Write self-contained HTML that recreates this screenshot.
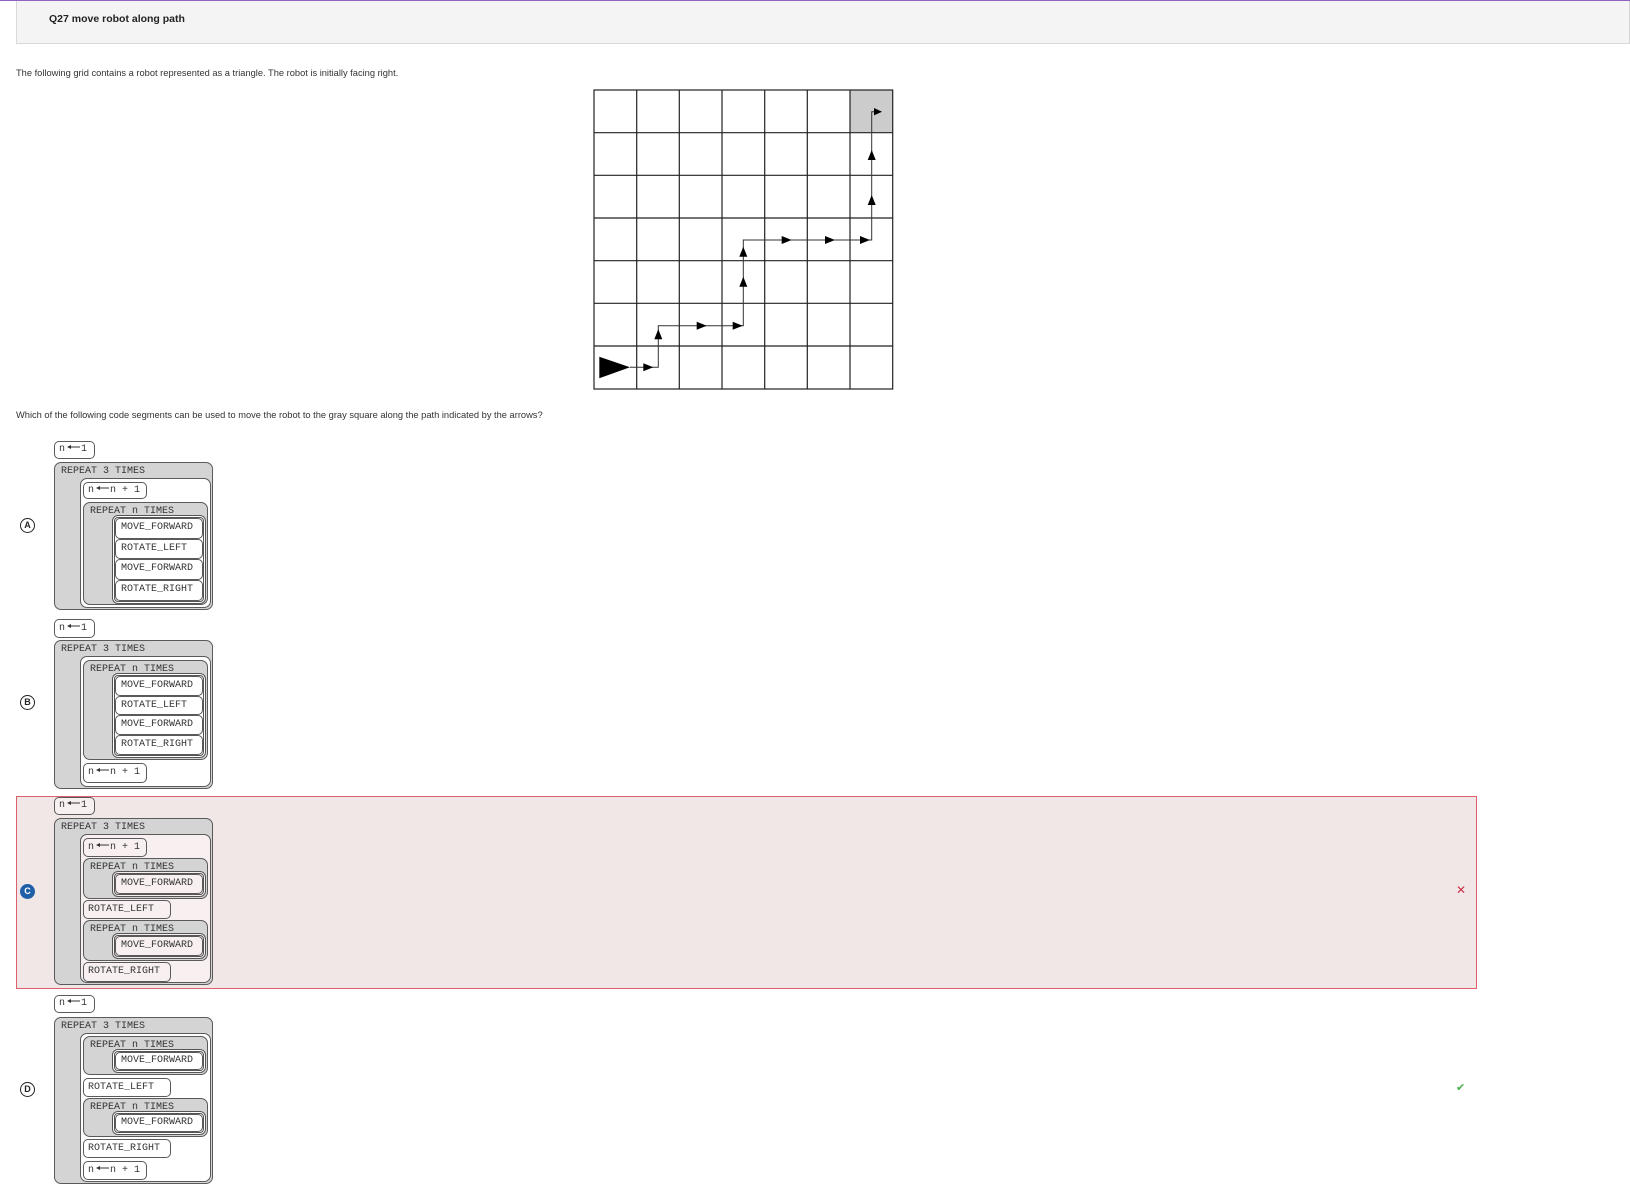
<!DOCTYPE html>
<html><head><meta charset="utf-8"><style>
html,body{margin:0;padding:0;background:#fff;width:1630px;height:1192px;overflow:hidden;position:relative;font-family:"Liberation Sans",sans-serif;}
.a{position:absolute;box-sizing:border-box;}
.w,.g,.d,.it{position:absolute;box-sizing:border-box;border:1px solid #5a5a5a;border-radius:5px;background:#fff;font:10px "Liberation Mono",monospace;color:#333;white-space:pre;}
.g{background:#d4d4d4;border-radius:7px;padding:3px 0 0 6px;line-height:12px;}
.w{padding-left:4px;}
.d{border:3px double #555;border-radius:6px;background:#fff;}
.it{position:relative;height:20px;line-height:18px;padding-left:5px;border-radius:5px;}
.circ{position:absolute;width:13px;height:13px;border:1px solid #222;border-radius:50%;font:bold 9px "Liberation Sans",sans-serif;text-align:center;line-height:13px;color:#222;box-sizing:content-box;}
.ar{display:inline-block;width:16px;height:10px;vertical-align:-1px;}
.pk .w,.pk .d,.pk .it{background:#f8f0f0;}
</style></head><body>
<div class="a" style="left:0;top:0;width:1630px;height:1px;background:#8e63c4"></div>
<div class="a" style="left:16px;top:1px;width:1614px;height:43px;background:#f4f4f4;border:1px solid #d8d8d8;border-top:none"></div>
<div class="a" style="left:49px;top:13px;font-size:10.5px;font-weight:bold;color:#222">Q27 move robot along path</div>
<div class="a" style="left:16px;top:68px;font-size:9.3px;color:#333">The following grid contains a robot represented as a triangle. The robot is initially facing right.</div>

<svg class="a" style="left:593px;top:89px" width="302" height="302" viewBox="-1 -1 302 302">
<rect x="256" y="0" width="42.7" height="42.7" fill="#ccc"/>
<g stroke="#222" stroke-width="1.2" fill="none">
<rect x="0" y="0" width="298.7" height="299"/>
<path d="M42.7 0V299M85.3 0V299M128 0V299M170.7 0V299M213.3 0V299M256 0V299M0 42.7H298.7M0 85.3H298.7M0 128H298.7M0 170.7H298.7M0 213.3H298.7M0 256H298.7"/>
</g>
<path d="M36 277.3H64.3V235.7H149.3V150H277.7V21.7H287" stroke="#333" stroke-width="1" fill="none"/>
<polygon points="5.3,266.7 5.3,288.3 36,277.3" fill="#000"/>
<g fill="#000">
<polygon points="59.3,277.3 49.3,273.3 49.3,281.3"/>
<polygon points="112.7,235.7 102.7,231.7 102.7,239.7"/>
<polygon points="148.7,235.7 138.7,231.7 138.7,239.7"/>
<polygon points="197.7,150 187.7,146 187.7,154"/>
<polygon points="241,150 231,146 231,154"/>
<polygon points="276,150 266,146 266,154"/>
<polygon points="288,21.7 280,18 280,25.4"/>
<polygon points="64.3,239.3 60.3,249.3 68.3,249.3"/>
<polygon points="149.3,186.7 145.3,196.7 153.3,196.7"/>
<polygon points="149.3,156.7 145.3,166.7 153.3,166.7"/>
<polygon points="277.7,105 273.7,115 281.7,115"/>
<polygon points="277.7,60 273.7,70 281.7,70"/>
</g>
</svg>

<div class="a" style="left:16px;top:410px;font-size:9.3px;color:#333">Which of the following code segments can be used to move the robot to the gray square along the path indicated by the arrows?</div>

<div class="a" style="left:16px;top:796px;width:1461px;height:193px;background:#f2e7e7;border:1px solid #dc5f6d"></div>
<div class="a" style="left:1456px;top:883px;color:#d03048;font:bold 12px 'DejaVu Sans',sans-serif">✕</div>
<div class="a" style="left:1456px;top:1081px;color:#4caf50;font:bold 11px 'DejaVu Sans',sans-serif">✔</div>

<div class="circ" style="left:20px;top:518px">A</div>
<div class="circ" style="left:20px;top:695px">B</div>
<div class="circ" style="left:20px;top:884px;background:#1f5fa8;color:#fff;border-color:#1f5fa8">C</div>
<div class="circ" style="left:20px;top:1082px">D</div>

<!-- A -->
<div class="w" style="left:54px;top:441px;width:41px;height:18px;line-height:16px">n<svg class="ar" viewBox="0 0 16 10"><path d="M4 5H15" stroke="#333"/><path d="M2 5L6 3V7Z" fill="#333"/></svg>1</div>
<div class="g" style="left:54px;top:462px;width:159px;height:148px">REPEAT 3 TIMES</div>
<div class="w" style="left:80px;top:478px;width:131px;height:130px;border-radius:7px"></div>
<div class="w" style="left:83px;top:482px;width:64px;height:17px;line-height:15px">n<svg class="ar" viewBox="0 0 16 10"><path d="M4 5H15" stroke="#333"/><path d="M2 5L6 3V7Z" fill="#333"/></svg>n + 1</div>
<div class="g" style="left:83px;top:502px;width:125px;height:103px">REPEAT n TIMES</div>
<div class="d" style="left:112px;top:515px;width:94px;height:89px"><div class="it" style="height:20.7px">MOVE_FORWARD</div><div class="it" style="height:20.7px">ROTATE_LEFT</div><div class="it" style="height:20.7px">MOVE_FORWARD</div><div class="it" style="height:20.7px">ROTATE_RIGHT</div></div>

<!-- B -->
<div class="w" style="left:54px;top:619px;width:41px;height:19px;line-height:17px">n<svg class="ar" viewBox="0 0 16 10"><path d="M4 5H15" stroke="#333"/><path d="M2 5L6 3V7Z" fill="#333"/></svg>1</div>
<div class="g" style="left:54px;top:640px;width:159px;height:149px">REPEAT 3 TIMES</div>
<div class="w" style="left:80px;top:656px;width:131px;height:131px;border-radius:7px"></div>
<div class="g" style="left:83px;top:660px;width:125px;height:100px">REPEAT n TIMES</div>
<div class="d" style="left:112px;top:673px;width:94px;height:85px"><div class="it" style="height:19.7px">MOVE_FORWARD</div><div class="it" style="height:19.7px">ROTATE_LEFT</div><div class="it" style="height:19.7px">MOVE_FORWARD</div><div class="it" style="height:19.7px">ROTATE_RIGHT</div></div>
<div class="w" style="left:83px;top:763px;width:64px;height:20px;line-height:18px">n<svg class="ar" viewBox="0 0 16 10"><path d="M4 5H15" stroke="#333"/><path d="M2 5L6 3V7Z" fill="#333"/></svg>n + 1</div>

<!-- C -->
<div class="pk">
<div class="w" style="left:54px;top:797px;width:41px;height:18px;line-height:16px">n<svg class="ar" viewBox="0 0 16 10"><path d="M4 5H15" stroke="#333"/><path d="M2 5L6 3V7Z" fill="#333"/></svg>1</div>
<div class="g" style="left:54px;top:818px;width:159px;height:167px">REPEAT 3 TIMES</div>
<div class="w" style="left:80px;top:834px;width:131px;height:149px;border-radius:7px"></div>
<div class="w" style="left:83px;top:838px;width:64px;height:19px;line-height:17px">n<svg class="ar" viewBox="0 0 16 10"><path d="M4 5H15" stroke="#333"/><path d="M2 5L6 3V7Z" fill="#333"/></svg>n + 1</div>
<div class="g" style="left:83px;top:858px;width:125px;height:41px">REPEAT n TIMES</div>
<div class="d" style="left:112px;top:871px;width:94px;height:26px"><div class="it" style="height:20px">MOVE_FORWARD</div></div>
<div class="w" style="left:83px;top:900px;width:88px;height:19px;line-height:17px">ROTATE_LEFT</div>
<div class="g" style="left:83px;top:920px;width:125px;height:41px">REPEAT n TIMES</div>
<div class="d" style="left:112px;top:933px;width:94px;height:26px"><div class="it" style="height:20px">MOVE_FORWARD</div></div>
<div class="w" style="left:83px;top:962px;width:88px;height:20px;line-height:18px">ROTATE_RIGHT</div>
</div>

<!-- D -->
<div class="w" style="left:54px;top:995px;width:41px;height:18px;line-height:16px">n<svg class="ar" viewBox="0 0 16 10"><path d="M4 5H15" stroke="#333"/><path d="M2 5L6 3V7Z" fill="#333"/></svg>1</div>
<div class="g" style="left:54px;top:1017px;width:159px;height:167px">REPEAT 3 TIMES</div>
<div class="w" style="left:80px;top:1033px;width:131px;height:149px;border-radius:7px"></div>
<div class="g" style="left:83px;top:1036px;width:125px;height:39px">REPEAT n TIMES</div>
<div class="d" style="left:112px;top:1049px;width:94px;height:24px"><div class="it" style="height:18px;line-height:16px">MOVE_FORWARD</div></div>
<div class="w" style="left:83px;top:1078px;width:88px;height:19px;line-height:17px">ROTATE_LEFT</div>
<div class="g" style="left:83px;top:1098px;width:125px;height:39px">REPEAT n TIMES</div>
<div class="d" style="left:112px;top:1111px;width:94px;height:24px"><div class="it" style="height:18px;line-height:16px">MOVE_FORWARD</div></div>
<div class="w" style="left:83px;top:1139px;width:88px;height:19px;line-height:17px">ROTATE_RIGHT</div>
<div class="w" style="left:83px;top:1161px;width:64px;height:19px;line-height:17px">n<svg class="ar" viewBox="0 0 16 10"><path d="M4 5H15" stroke="#333"/><path d="M2 5L6 3V7Z" fill="#333"/></svg>n + 1</div>
</body></html>
